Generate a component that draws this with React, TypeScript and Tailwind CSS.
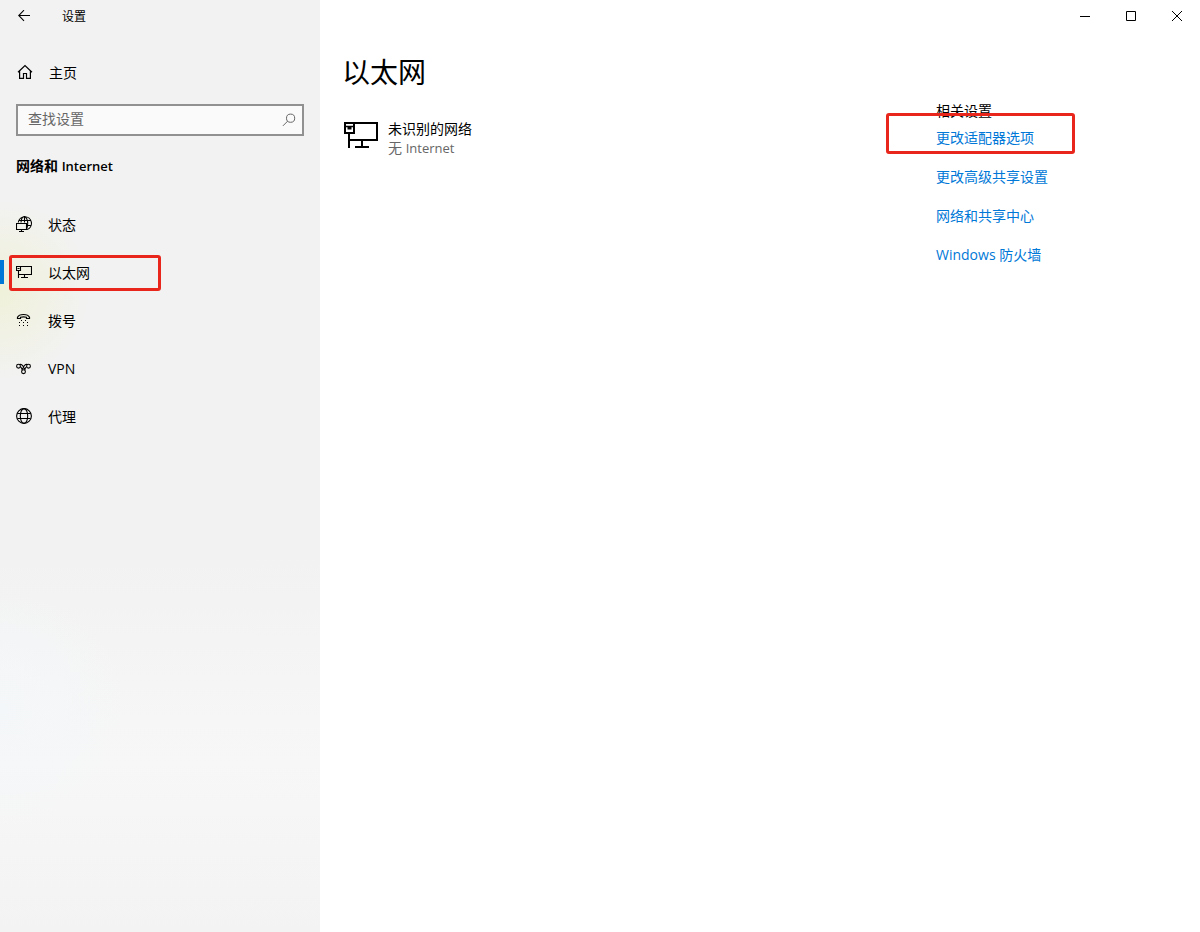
import type { ReactNode } from "react";

type IconProps = { className?: string };

function BackIcon() {
  return (
    <svg width="12" height="12" viewBox="0 0 12 12" fill="none" stroke="currentColor" strokeWidth="1.1" aria-hidden="true">
      <path d="M12 5.500H.8M6 .2.7 5.500 6 10.800" />
    </svg>
  );
}

function HomeIcon() {
  return (
    <svg width="16" height="16" viewBox="0 0 16 16" fill="none" stroke="currentColor" strokeWidth="1.2" aria-hidden="true">
      <path d="M1 8.200 8 1.600l7 6.600M2.600 7v7.400h3.900V9.500h3v4.900h3.900V7" />
    </svg>
  );
}

function SearchIcon() {
  return (
    <svg width="14" height="14" viewBox="0 0 14 14" fill="none" stroke="currentColor" strokeWidth="1" aria-hidden="true">
      <circle cx="8.600" cy="5.200" r="4.100" />
      <path d="M5.700 8.100.9 12.900" />
    </svg>
  );
}

function StatusIcon() {
  return (
    <svg width="16" height="16" viewBox="0 0 16 16" fill="none" stroke="currentColor" strokeWidth="1.100" aria-hidden="true">
      <path d="M2.300 6.500A6.600 6.600 0 1 1 11 13.600M3.200 4.500h11.400M10.500 9.500h4.300M5 6.500C5.200 3.600 6.400.8 8.300.8s3.400 3 3.400 6.400c0 2.300-.4 4.300-1.200 5.400M8.500.8v5.700" />
      <path d="M.5 7.500h10v6H.5zM5.500 13.500v2M3 15.500h5" />
    </svg>
  );
}

function EthernetIcon({ className }: IconProps) {
  return (
    <svg className={className} viewBox="0 0 34 28" fill="none" stroke="currentColor" strokeWidth="2" aria-hidden="true">
      <path d="M10 2h23v17H5M18 19v7M11 26h14M1 2h9v10H1zM5 12v15" />
      <path d="M1 5.500h9" strokeWidth="1.500" />
      <path d="M3.500 6h4v2.500h-4z" fill="currentColor" stroke="none" />
    </svg>
  );
}

function EthernetSmallIcon() {
  return (
    <svg width="16" height="14" viewBox="0 0 16 14" fill="none" stroke="currentColor" strokeWidth="1.100" aria-hidden="true">
      <path d="M4.500 1.500h11v8h-13M8.500 9.500v3M5 12.500h7M.5 1.500h4v4h-4zM2.500 5.500v7.500M1.500 3.500h2" />
    </svg>
  );
}

function DialIcon() {
  return (
    <svg width="16" height="16" viewBox="0 0 16 16" fill="none" stroke="currentColor" strokeWidth="1.200" aria-hidden="true">
      <path d="M1.500 6.500V5.300C2.500 3.300 5 2.500 7.500 2.500s5 .8 6 2.800v1.200h-3V5.300C9.500 5 8.500 4.900 7.500 4.900S5.500 5 4.500 5.300v1.200z" />
      <path d="M3 10.500h1M7 10.500h1M11 10.500h1M3 13.500h1M7 13.500h1M11 13.500h1M5 8.500h1M9 8.500h1" />
    </svg>
  );
}

function VpnIcon() {
  return (
    <svg width="16" height="16" viewBox="0 0 16 16" fill="none" stroke="currentColor" strokeWidth="1.100" aria-hidden="true">
      <circle cx="2.500" cy="6.200" r="1.900" />
      <circle cx="12.500" cy="6.200" r="1.900" />
      <circle cx="7.500" cy="11.700" r="1.900" />
      <path d="M3.500 4.600c2-.9 2.700.4 3.500 1.500l2.200 4.200M4.200 7.100c1-.4 1.300 1.500 2.200 2.400M11.500 4.600c-2-.9-2.800.5-3.600 1.600L5.800 10.300M10.700 7.100c-1-.4-1.400 1.500-2.200 2.400" />
    </svg>
  );
}

function ProxyIcon() {
  return (
    <svg width="16" height="16" viewBox="0 0 16 16" fill="none" stroke="currentColor" strokeWidth="1.100" aria-hidden="true">
      <circle cx="8" cy="8" r="7.400" />
      <ellipse cx="8" cy="8" rx="3.700" ry="7.400" />
      <path d="M1.400 5.500h13.200M1.400 10.500h13.200" />
    </svg>
  );
}

/** Outline drawn over the item that the reader should click. */
function Marker({ className }: IconProps) {
  return (
    <span
      aria-hidden="true"
      className={`pointer-events-none absolute rounded-[3px] border-3 border-[#e8261c] ${className ?? ""}`}
    />
  );
}

type NavItem = { label: string; key: string; icon: ReactNode; active?: boolean };

const navItems: NavItem[] = [
  { key: "status", label: "状态", icon: <StatusIcon /> },
  { key: "ethernet", label: "以太网", icon: <EthernetSmallIcon />, active: true },
  { key: "dial", label: "拨号", icon: <DialIcon /> },
  { key: "vpn", label: "VPN", icon: <VpnIcon /> },
  { key: "proxy", label: "代理", icon: <ProxyIcon /> },
];

const relatedLinks: { key: string; label: string; marked?: boolean }[] = [
  { key: "adapter", label: "更改适配器选项", marked: true },
  { key: "sharing", label: "更改高级共享设置" },
  { key: "center", label: "网络和共享中心" },
  { key: "firewall", label: "Windows 防火墙" },
];

function Sidebar() {
  return (
    <aside className="flex w-80 shrink-0 flex-col bg-[#f2f2f2] bg-[radial-gradient(ellipse_90px_90px_at_0px_290px,#f0f1d9_0%,transparent_100%),radial-gradient(ellipse_130px_120px_at_0px_710px,#f4f7f9_0%,transparent_100%),linear-gradient(to_bottom,#f2f2f2_0%,#f2f2f2_60%,#f7f7f7_82%,#f3f3f3_100%)]">
      <header className="flex h-8 items-center">
        <button type="button" aria-label="返回" className="flex h-8 w-12 items-center justify-center">
          <BackIcon />
        </button>
        <span className="pt-0.5 pl-3.5 text-xs">设置</span>
      </header>
      <a href="#home" className="mt-4 flex h-12 items-center gap-4 pl-[17px]">
        <HomeIcon />
        <span className="pt-0.5">主页</span>
      </a>
      <div className="mx-4 mt-2 flex h-8 items-center border-2 border-[#919191] bg-[#fafafa] pr-1.5">
        <input
          type="text"
          aria-label="查找设置"
          placeholder="查找设置"
          className="min-w-0 flex-1 bg-transparent pb-0.5 pl-2.5 leading-5 outline-none placeholder:text-[#666666]"
        />
        <button type="button" aria-label="搜索" className="text-[#666666]">
          <SearchIcon />
        </button>
      </div>
      <h2 className="mt-5 pl-4 leading-5 font-bold">
        网络和 <span className="text-[13px] font-semibold">Internet</span>
      </h2>
      <nav className="mt-6">
        {navItems.map((item) => (
          <a key={item.key} href={`#${item.key}`} className="relative flex h-12 items-center">
            <span className={item.active ? "h-6 w-1 bg-[#0078d7]" : "h-6 w-1"} />
            <span className="ml-3 flex w-4 justify-center">{item.icon}</span>
            <span className="pt-0.5 pl-4">{item.label}</span>
            {item.active && <Marker className="top-[7px] left-[9px] h-9 w-[152px]" />}
          </a>
        ))}
      </nav>
    </aside>
  );
}

function WindowControls() {
  return (
    <div className="flex h-8 justify-end">
      <button type="button" aria-label="最小化" className="flex w-[46px] items-center justify-center">
        <svg width="10" height="10" viewBox="0 0 10 10" stroke="currentColor" aria-hidden="true">
          <path d="M0 5.500h10" />
        </svg>
      </button>
      <button type="button" aria-label="最大化" className="flex w-[46px] items-center justify-center">
        <svg width="10" height="10" viewBox="0 0 10 10" fill="none" stroke="currentColor" aria-hidden="true">
          <path d="M.5.500h9v9h-9z" />
        </svg>
      </button>
      <button type="button" aria-label="关闭" className="flex w-[46px] items-center justify-center">
        <svg width="10" height="10" viewBox="0 0 10 10" stroke="currentColor" aria-hidden="true">
          <path d="m0 0 10 10M10 0 0 10" />
        </svg>
      </button>
    </div>
  );
}

export default function App() {
  return (
    <div className="flex min-h-screen bg-white font-['Open_Sans','Noto_Sans_CJK_SC',sans-serif] text-sm text-black">
      <Sidebar />
      <main className="min-w-0 flex-1">
        <WindowControls />
        <div className="flex pt-5 pl-[22px]">
          <section className="min-w-0 flex-1">
            <h1 className="text-[28px] leading-10">以太网</h1>
            <div className="mt-[27px] flex items-start gap-2.5 pl-0.5">
              <EthernetIcon className="mt-0.5 h-7 w-[34px]" />
              <div className="leading-[19px]">
                <p>未识别的网络</p>
                <p className="text-[#666666]">
                  无 <span className="text-[13px]">Internet</span>
                </p>
              </div>
            </div>
          </section>
          <section className="w-[264px] shrink-0 pt-[49px] leading-5">
            <h2>相关设置</h2>
            <ul className="mt-[7px] flex flex-col gap-[19px]">
              {relatedLinks.map((link) => (
                <li key={link.key} className="relative text-[#0078d7]">
                  <a href={`#${link.key}`}>{link.label}</a>
                  {link.marked && <Marker className="-top-[15px] -left-[50px] h-[41px] w-[189px]" />}
                </li>
              ))}
            </ul>
          </section>
        </div>
      </main>
    </div>
  );
}
